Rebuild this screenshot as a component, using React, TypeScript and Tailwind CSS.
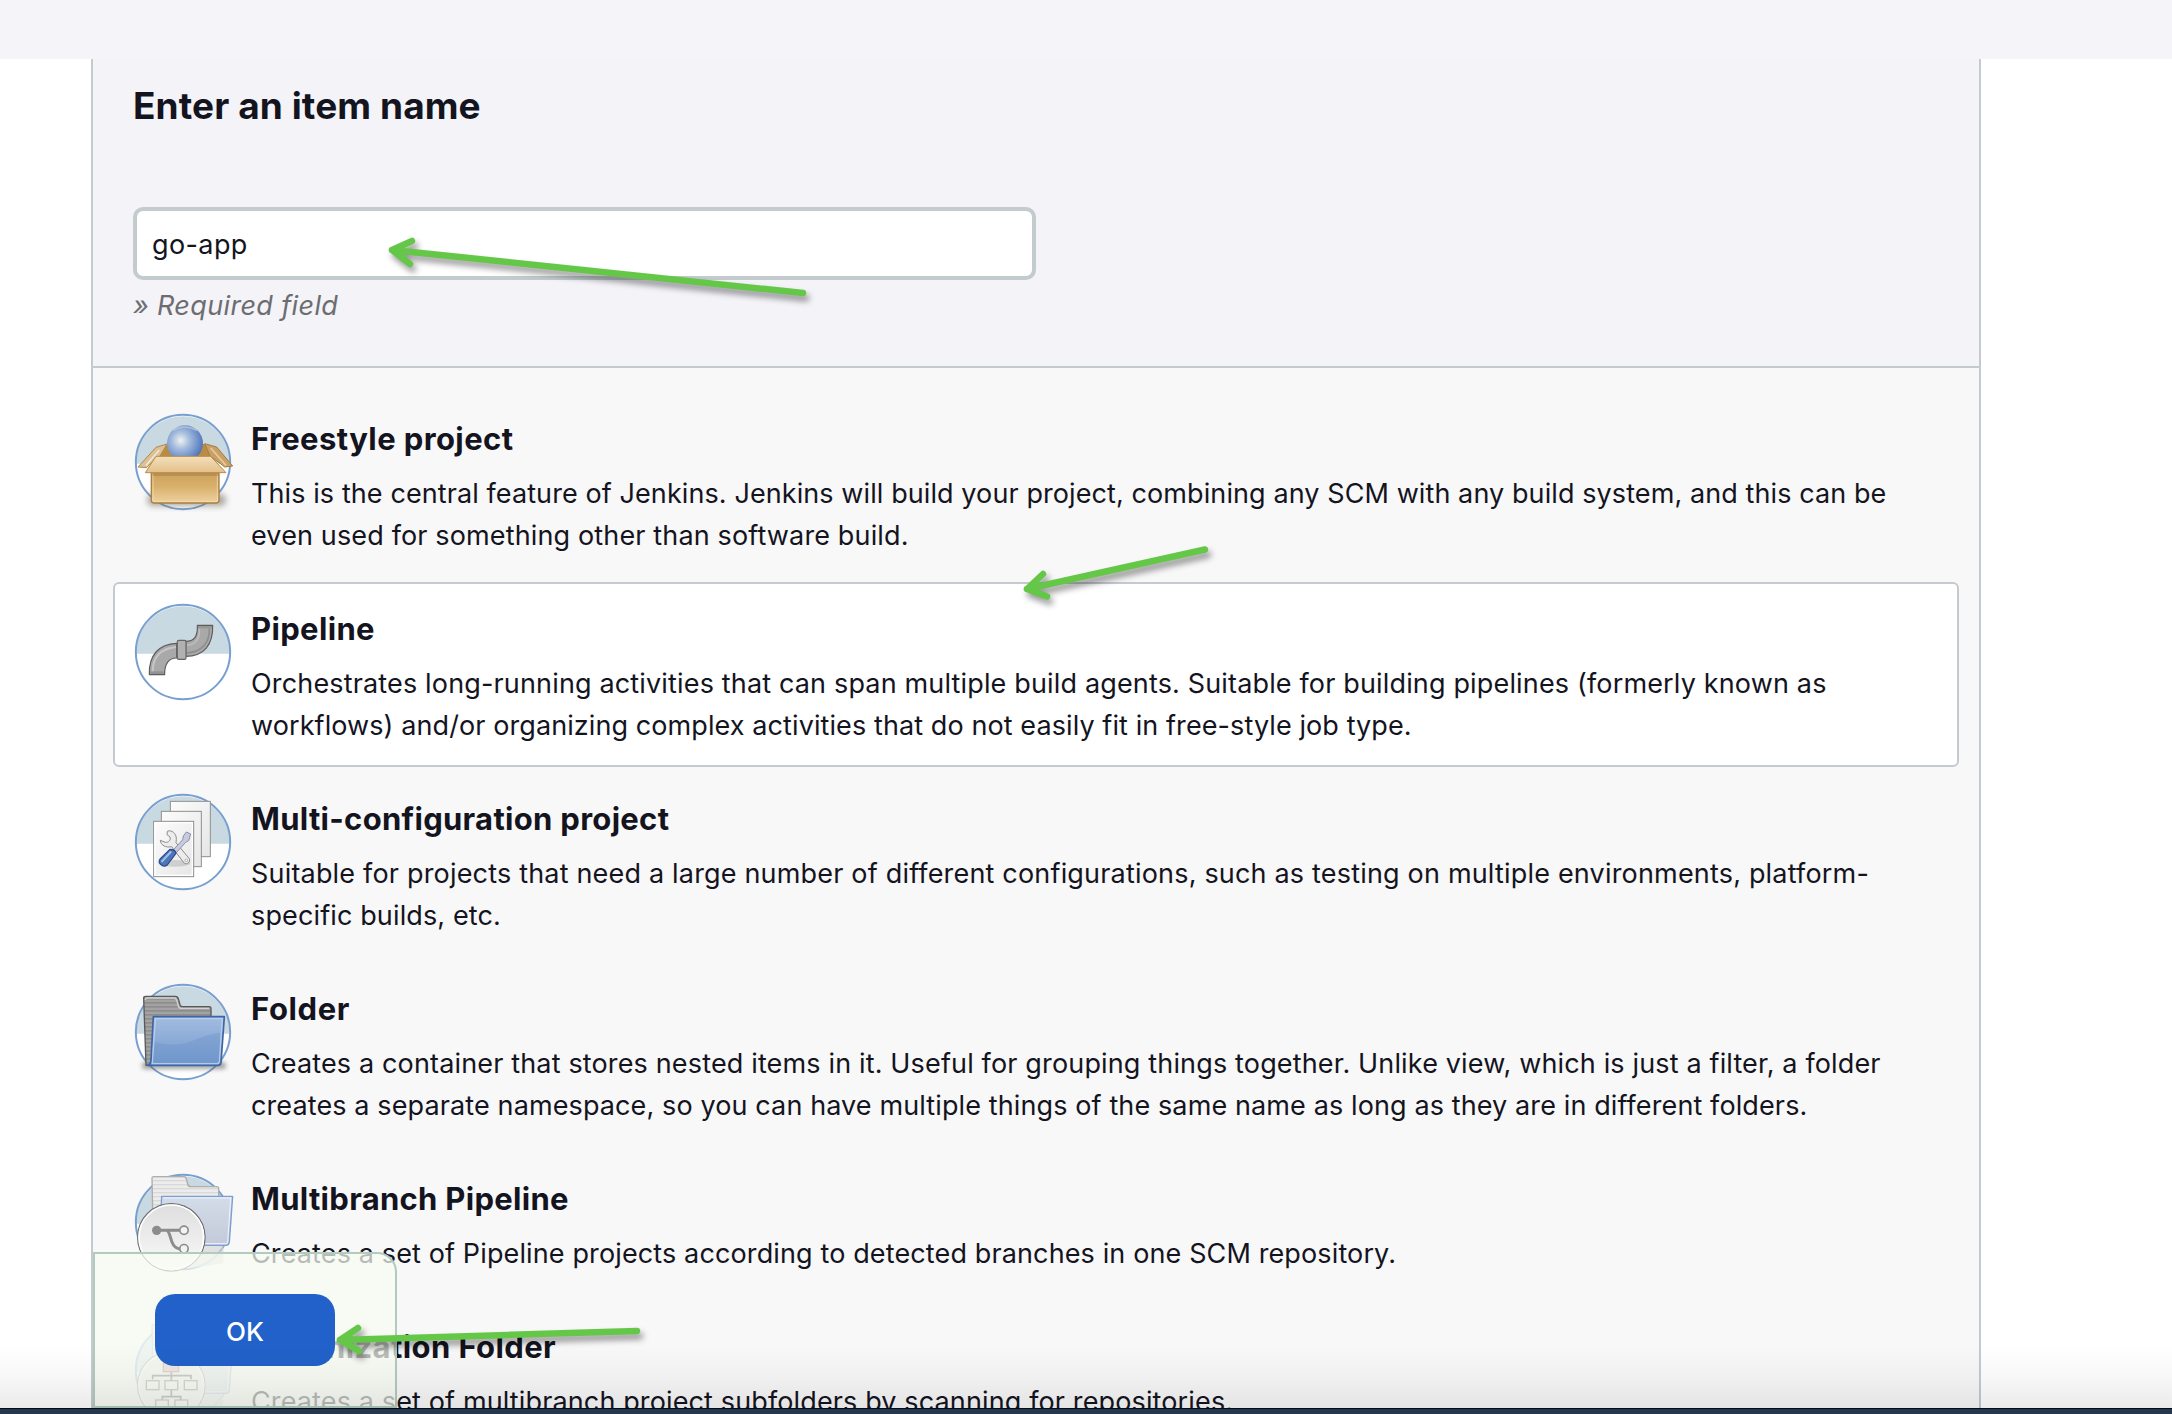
import React from "react";

function CircleBase() {
  return (
    <>
      <circle cx="189" cy="186" r="142" fill="#fff" />
      <path d="M47 191A142 142 0 0 1 331 191Z" fill="#c9d9e1" />
      <circle cx="189" cy="186" r="141.5" fill="none" stroke="#789fd0" strokeWidth="6" />
    </>
  );
}

function IconFrame({ children }: { children: React.ReactNode }) {
  return (
    <svg viewBox="0 0 390 360" className="mt-1.5 h-[120px] w-[130px] shrink-0">
      {children}
    </svg>
  );
}

function FreestyleIcon() {
  return (
    <IconFrame>
      <defs>
        <linearGradient id="boxFront" x1="0" y1="0" x2="0" y2="1">
          <stop offset="0" stopColor="#c99f5a" />
          <stop offset="0.5" stopColor="#d9b06b" />
          <stop offset="1" stopColor="#efd2a0" />
        </linearGradient>
        <linearGradient id="boxFlap" x1="0" y1="0" x2="0" y2="1">
          <stop offset="0" stopColor="#f3dfba" />
          <stop offset="1" stopColor="#e3c08a" />
        </linearGradient>
        <radialGradient id="ball" cx="0.38" cy="0.42" r="0.62">
          <stop offset="0" stopColor="#eef3ee" />
          <stop offset="0.4" stopColor="#a3bbdd" />
          <stop offset="0.8" stopColor="#6d8fc8" />
          <stop offset="1" stopColor="#5578b4" />
        </radialGradient>
        <filter id="boxBlur" x="-20%" y="-100%" width="140%" height="300%">
          <feGaussianBlur stdDeviation="9" />
        </filter>
      </defs>
      <CircleBase />
      <rect x="82" y="282" width="236" height="36" rx="16" fill="#6b6459" opacity="0.55" filter="url(#boxBlur)" />
      <path d="M116 172L140 134L254 132L276 172Z" fill="#b98b45" />
      <circle cx="195" cy="130" r="54" fill="url(#ball)" />
      <path d="M158 92Q194 70 232 92" fill="none" stroke="#b5c8df" strokeWidth="4" opacity="0.8" />
      <path d="M141 132L108 142L54 201L80 203L92 190L120 168Z" fill="#dcc193" stroke="#ad8853" strokeWidth="3" />
      <path d="M118 150L78 196" stroke="#fff" strokeWidth="5" opacity="0.6" />
      <path d="M254 131L290 141L338 198L314 201L300 190L270 168Z" fill="#c9a164" stroke="#a57b3f" strokeWidth="3" />
      <path d="M272 144L318 196" stroke="#f2dcb4" strokeWidth="5" opacity="0.7" />
      <path d="M94 210H297V301Q297 309 289 309H102Q94 309 94 301Z" fill="url(#boxFront)" stroke="#a9813f" strokeWidth="4" />
      <path d="M99 222V304H292V222" fill="none" stroke="#f4dfb6" strokeWidth="3" opacity="0.7" />
      <path d="M108 169H272L318 218H76Z" fill="url(#boxFlap)" stroke="#b88c4d" strokeWidth="3" strokeLinejoin="round" />
      <path d="M98 219H296V228H98Z" fill="#9c7434" opacity="0.4" />
    </IconFrame>
  );
}

function PipelineIcon() {
  return (
    <IconFrame>
      <CircleBase />
      <g strokeLinejoin="round">
        <path d="M88 254C86 196 116 162 170 160V204C146 204 133 222 134 254Z" fill="#a9a9a9" stroke="#5d5d5d" strokeWidth="3.5" />
        <path d="M98 246C98 202 122 176 168 171" fill="none" stroke="#c6c6c6" strokeWidth="6" />
        <path d="M197 154C222 154 234 140 232 106H278C280 164 252 199 197 199Z" fill="#a9a9a9" stroke="#5d5d5d" strokeWidth="3.5" />
        <path d="M238 116C240 150 224 164 201 166" fill="none" stroke="#bebebe" strokeWidth="5" />
        <path d="M268 114C270 156 248 186 200 189" fill="none" stroke="#8f8f8f" strokeWidth="5" />
        <path d="M91 244H131V252H91Z" fill="#929292" />
        <path d="M234 108H276V115H234Z" fill="#969696" />
        <rect x="172" y="151" width="26" height="57" rx="4" fill="#b1b1b1" stroke="#666" strokeWidth="3.5" />
      </g>
    </IconFrame>
  );
}

function MultiConfigIcon() {
  return (
    <IconFrame>
      <defs>
        <linearGradient id="sheet" x1="0" y1="0" x2="1" y2="1">
          <stop offset="0" stopColor="#fcfcfc" />
          <stop offset="1" stopColor="#e6e6e6" />
        </linearGradient>
      </defs>
      <CircleBase />
      <g fill="url(#sheet)" stroke="#8f908e" strokeWidth="3">
        <rect x="151" y="64" width="120" height="166" />
        <rect x="124" y="94" width="120" height="166" />
        <rect x="101" y="124" width="120" height="166" />
      </g>
      <rect x="105" y="128" width="112" height="158" fill="none" stroke="#fff" strokeWidth="4" />
      <ellipse cx="163" cy="250" rx="48" ry="10" fill="#000" opacity="0.13" />
      <path
        d="M142 154C154 148 170 160 169 178L168 188L208 236C212 246 202 254 193 250L155 200C138 204 122 196 121 181L136 187C146 188 153 180 150 171L141 164Z"
        fill="#ececec"
        stroke="#8c8c8c"
        strokeWidth="3"
        strokeLinejoin="round"
      />
      <circle cx="199" cy="241" r="4" fill="#fff" stroke="#8c8c8c" strokeWidth="2" />
      <path d="M199 156L212 162L206 182L197 187L166 221L157 213L188 179L190 168Z" fill="#c7cbdc" stroke="#8b90aa" strokeWidth="3" strokeLinejoin="round" />
      <path d="M150 208Q166 208 168 220L141 256Q131 263 121 252Q114 245 121 236Z" fill="#4d76b8" stroke="#27498b" strokeWidth="3.5" />
      <path d="M152 216L126 244" stroke="#a4bfe6" strokeWidth="6" strokeLinecap="round" />
    </IconFrame>
  );
}

function FolderIcon() {
  return (
    <IconFrame>
      <defs>
        <linearGradient id="folderFront" x1="0" y1="0" x2="0" y2="1">
          <stop offset="0" stopColor="#a3bce0" />
          <stop offset="1" stopColor="#7399cd" />
        </linearGradient>
        <pattern id="folderStripes" width="10" height="12" patternUnits="userSpaceOnUse">
          <rect width="10" height="12" fill="#a3a3a3" />
          <rect width="10" height="5" fill="#8d8d8d" />
        </pattern>
        <filter id="folderBlur" x="-20%" y="-100%" width="140%" height="300%">
          <feGaussianBlur stdDeviation="7" />
        </filter>
      </defs>
      <CircleBase />
      <rect x="66" y="276" width="252" height="22" rx="10" fill="#555" opacity="0.5" filter="url(#folderBlur)" />
      <path d="M78 286L71 84Q71 79 77 79H166Q173 79 175 86L180 104Q182 110 188 110H268Q273 110 273 116V286Z" fill="url(#folderStripes)" stroke="#595959" strokeWidth="4" strokeLinejoin="round" />
      <path d="M76 90Q76 84 82 84H162Q168 84 170 90L175 108Q177 115 184 115H267" fill="none" stroke="#d2d2d2" strokeWidth="4" />
      <path d="M100 140H313L303 278Q302 286 294 286H82Q92 284 93 270Z" fill="url(#folderFront)" stroke="#3d66a6" strokeWidth="5" strokeLinejoin="round" />
      <path d="M106 146H307L298 274Q297 281 290 281H97Z" fill="none" stroke="#c3d4ec" strokeWidth="4" opacity="0.8" />
      <path d="M104 216Q170 232 214 214Q262 192 301 188L296 277H99Z" fill="#6690c8" opacity="0.35" />
    </IconFrame>
  );
}

function FadedFolder() {
  return (
    <>
      <defs>
        <linearGradient id="fadedFront" x1="0" y1="0" x2="0" y2="1">
          <stop offset="0" stopColor="#d3dcea" />
          <stop offset="1" stopColor="#c3c9d8" />
        </linearGradient>
        <pattern id="fadedStripes" width="10" height="12" patternUnits="userSpaceOnUse">
          <rect width="10" height="12" fill="#ececec" />
          <rect width="10" height="4" fill="#d9d9d9" />
        </pattern>
        <linearGradient id="badge" x1="0" y1="0" x2="0" y2="1">
          <stop offset="0" stopColor="#dedede" />
          <stop offset="1" stopColor="#fafafa" />
        </linearGradient>
      </defs>
      <CircleBase />
      <path d="M232 258H310V310L200 326L236 286Z" fill="#d4d4d4" opacity="0.7" />
      <path d="M100 250L96 54Q96 50 101 50H191Q197 50 199 56L203 72Q205 80 212 80H290Q296 80 296 86V250Z" fill="url(#fadedStripes)" stroke="#adadad" strokeWidth="4" strokeLinejoin="round" />
      <path d="M125 109H338L328 246Q327 256 318 256H118Z" fill="url(#fadedFront)" stroke="#7e9ed2" strokeWidth="4" strokeLinejoin="round" />
      <path d="M130 114H332L323 246Q322 251 316 251H200" fill="none" stroke="#f0f4fa" strokeWidth="3" />
      <circle cx="154" cy="232" r="101" fill="url(#badge)" stroke="#6d6d6d" strokeWidth="4" />
      <circle cx="154" cy="232" r="97" fill="none" stroke="#fff" strokeWidth="5" />
    </>
  );
}

function MultibranchIcon() {
  return (
    <IconFrame>
      <FadedFolder />
      <circle cx="110" cy="211" r="14" fill="#8c8c8a" />
      <path d="M110 211H180M140 211C156 216 146 264 182 267" fill="none" stroke="#8c8c8a" strokeWidth="9" />
      <circle cx="192" cy="211" r="12.5" fill="#f2f2f2" stroke="#8c8c8a" strokeWidth="5" />
      <circle cx="192" cy="266" r="12.5" fill="#f2f2f2" stroke="#8c8c8a" strokeWidth="5" />
    </IconFrame>
  );
}

function OrganizationIcon() {
  return (
    <IconFrame>
      <g opacity="0.65">
        <FadedFolder />
      </g>
      <path d="M154 190V216M98 214V203H213V214M154 246V266M127 276V266H182V276" fill="none" stroke="#555" strokeWidth="5" />
      <rect x="130" y="158" width="46" height="33" fill="#dba9c0" stroke="#a87070" strokeWidth="4" />
      <g fill="#f3f3f3" stroke="#777" strokeWidth="4">
        <rect x="79" y="218" width="38" height="27" />
        <rect x="135" y="218" width="38" height="27" />
        <rect x="193" y="218" width="38" height="27" />
        <rect x="107" y="276" width="38" height="27" />
        <rect x="165" y="276" width="38" height="27" />
      </g>
    </IconFrame>
  );
}

type Line = { text: string; cls: string };
type Item = { name: Line; lines: Line[]; icon: () => React.ReactElement; box: string };

const items: Item[] = [
  {
    name: { text: "Freestyle project", cls: "tracking-[0.4px]" },
    lines: [
      { text: "This is the central feature of Jenkins. Jenkins will build your project, combining any SCM with any build system, and this can be", cls: "tracking-[0.091px]" },
      { text: "even used for something other than software build.", cls: "tracking-[0.14px]" },
    ],
    icon: FreestyleIcon,
    box: "h-[185px] border-transparent",
  },
  {
    name: { text: "Pipeline", cls: "tracking-[0.35px]" },
    lines: [
      { text: "Orchestrates long-running activities that can span multiple build agents. Suitable for building pipelines (formerly known as", cls: "tracking-[0.156px]" },
      { text: "workflows) and/or organizing complex activities that do not easily fit in free-style job type.", cls: "tracking-[0.09px]" },
    ],
    icon: PipelineIcon,
    box: "h-[185px] border-[#c4cacf] bg-white",
  },
  {
    name: { text: "Multi-configuration project", cls: "tracking-[0.3px]" },
    lines: [
      { text: "Suitable for projects that need a large number of different configurations, such as testing on multiple environments, platform-", cls: "tracking-[0.185px]" },
      { text: "specific builds, etc.", cls: "tracking-[0.13px]" },
    ],
    icon: MultiConfigIcon,
    box: "h-[185px] border-transparent",
  },
  {
    name: { text: "Folder", cls: "tracking-[0.6px]" },
    lines: [
      { text: "Creates a container that stores nested items in it. Useful for grouping things together. Unlike view, which is just a filter, a folder", cls: "tracking-[0.152px]" },
      { text: "creates a separate namespace, so you can have multiple things of the same name as long as they are in different folders.", cls: "tracking-[0.114px]" },
    ],
    icon: FolderIcon,
    box: "h-[185px] border-transparent",
  },
  {
    name: { text: "Multibranch Pipeline", cls: "tracking-[0.3px]" },
    lines: [{ text: "Creates a set of Pipeline projects according to detected branches in one SCM repository.", cls: "tracking-[0.126px]" }],
    icon: MultibranchIcon,
    box: "h-[143px] border-transparent",
  },
  {
    name: { text: "Organization Folder", cls: "tracking-[0.4px]" },
    lines: [{ text: "Creates a set of multibranch project subfolders by scanning for repositories.", cls: "tracking-[0.13px]" }],
    icon: OrganizationIcon,
    box: "h-[143px] border-transparent",
  },
];

function ItemRow({ item }: { item: Item }) {
  const Icon = item.icon;
  return (
    <li className={`flex shrink-0 items-start rounded-[6px] border-2 pl-[5px] ${item.box}`}>
      <Icon />
      <div className="mt-6 ml-px leading-[42px] whitespace-nowrap">
        <div className={`text-[31px] font-bold ${item.name.cls}`}>{item.name.text}</div>
        <div className="mt-[13px] text-[27px]">
          {item.lines.map((l) => (
            <div key={l.text} className={l.cls}>
              {l.text}
            </div>
          ))}
        </div>
      </div>
    </li>
  );
}

function Arrows() {
  return (
    <svg
      viewBox="0 0 2172 1414"
      className="pointer-events-none absolute inset-0 h-full w-full [filter:drop-shadow(3px_5px_3px_rgba(0,0,0,0.42))]"
      fill="none"
      stroke="#64c748"
      strokeWidth="6.5"
      strokeLinecap="round"
      strokeLinejoin="round"
    >
      <path d="M803 293L392 250M412 241L392 250L410 264" />
      <path d="M1205 549.5L1027 589M1043 574L1027 589L1047 596.5" />
      <path d="M637 1331L340 1340M358 1328L340 1340L359 1351" />
    </svg>
  );
}

export default function App() {
  return (
    <div className="relative flex h-[1414px] w-full flex-col overflow-hidden bg-white font-['Inter',sans-serif] text-[#14141f]">
      <div className="h-[59px] shrink-0 bg-[#f4f4f9]" />
      <main className="relative ml-[91px] flex h-[1349px] w-[1890px] shrink-0 flex-col overflow-hidden border-x-2 border-[#c4cacf] bg-[#f8f8f8]">
        <div className="h-[309px] shrink-0 border-b-2 border-[#c4cacf] bg-[#f3f3f8] pt-[19px] pl-10">
          <h1 className="text-[37px] leading-[56px] font-bold tracking-[0.1px] whitespace-nowrap">Enter an item name</h1>
          <div className="mt-[73px] flex h-[73px] w-[903px] items-center rounded-[10px] border-4 border-[#c3cbce] bg-white pt-0.5 pl-[15px] text-[27px] leading-[42px] tracking-[0.4px]">
            go-app
          </div>
          <div className="mt-[5px] text-[27px] leading-[42px] tracking-[0.35px] text-[#6d6d71] italic">» Required field</div>
        </div>
        <ul className="flex flex-col gap-[5px] px-5 pt-6">
          {items.map((item) => (
            <ItemRow key={item.name.text} item={item} />
          ))}
        </ul>
        <div className="absolute bottom-0 left-0 flex h-[156px] w-[304px] items-start rounded-tr-[20px] border-2 border-[#b1cbbd] bg-[#f7fcf2]/72 pt-10 pl-[60px]">
          <button className="flex h-[72px] w-[180px] items-center justify-center rounded-[20px] bg-[#2161c9] pt-0.5 text-[26px] font-medium text-white">OK</button>
        </div>
      </main>
      <div className="h-1.5 shrink-0 border-t border-[#050a14] bg-[#24394f]" />
      <div className="pointer-events-none absolute right-0 bottom-1.5 left-0 h-[64px] bg-gradient-to-b from-black/0 via-black/3 to-black/8" />
      <Arrows />
    </div>
  );
}
